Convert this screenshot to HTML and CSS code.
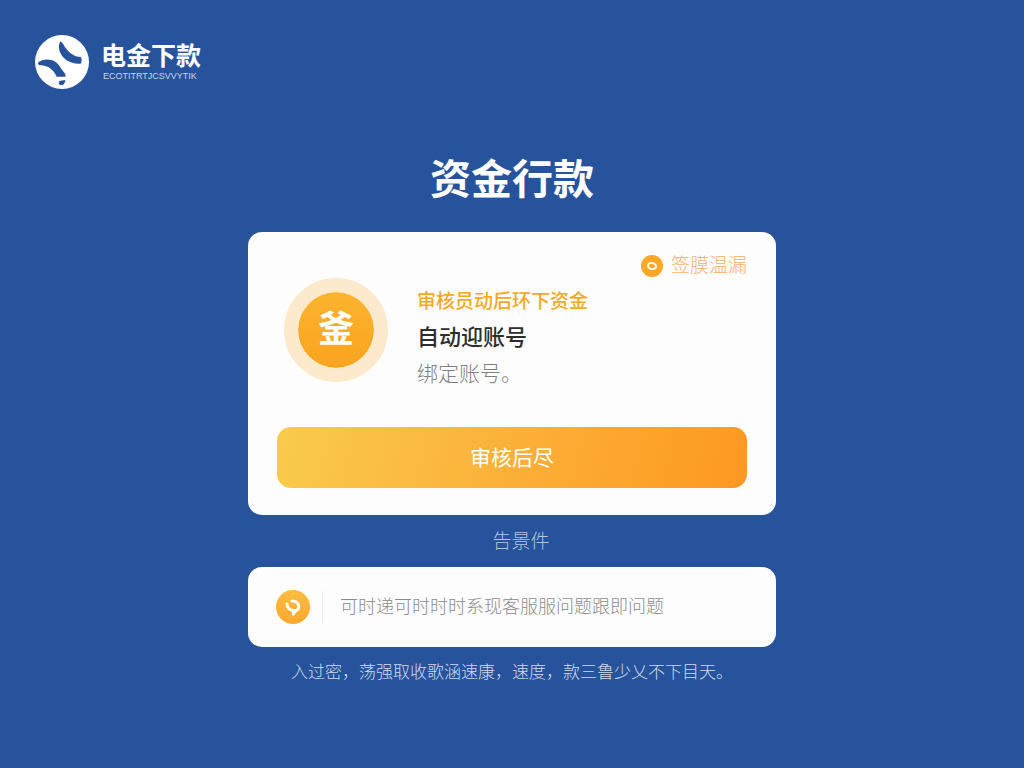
FILE: index.html
```html
<!DOCTYPE html>
<html lang="zh-CN">
<head>
    <meta charset="UTF-8">
    <meta name="viewport" content="width=device-width, initial-scale=1.0">
    <title>资金行款</title>
    <link rel="stylesheet" href="styles.css">
</head>
<body>
    <header class="header">
        <svg class="logo" viewBox="45 46 162 162" aria-hidden="true">
            <circle cx="126" cy="127" r="81" fill="#fff"/>
            <path d="M121 65C130 70 132 80 140 89C151 103 166 112 182 112Q185 113 185 122Q185 131 181 132C163 133 144 127 131 114C117 101 113 79 121 65Z" fill="#27539c"/>
            <path d="M55 128C64 119 83 117 97 122C116 129 122 147 132 158Q138 164 137 171H110C105 160 98 150 86 143C76 137 65 137 57 136Q52 133 55 128Z" fill="#27539c"/>
            <path d="M117 184L136 181Q137 189 130 195Q121 198 116 193Q120 189 117 184Z" fill="#27539c"/>
        </svg>
        <div class="brand">
            <span class="brand-name">电金下款</span>
            <span class="brand-sub">ECOTITRTJCSVVYTIK</span>
        </div>
    </header>

    <main class="container">
        <h1>资金行款</h1>

        <section class="card">
            <div class="badge">
                <svg class="badge-icon" viewBox="0 0 22 22" aria-hidden="true">
                    <circle cx="11" cy="11" r="11" fill="#fba826"/>
                    <ellipse cx="11" cy="11" rx="4" ry="3" fill="none" stroke="#fff" stroke-width="2" transform="rotate(15 11 11)"/>
                </svg>
                <span>签膜温漏</span>
            </div>
            <div class="account">
                <div class="coin"><span>釜</span></div>
                <div class="account-info">
                    <p class="status">审核员动后环下资金</p>
                    <p class="title">自动迎账号</p>
                    <p class="desc">绑定账号。</p>
                </div>
            </div>
            <button type="button" class="submit-btn">审核后尽</button>
        </section>

        <label class="hint" for="question">告景件</label>

        <div class="search">
            <svg class="search-icon" viewBox="0 0 34 34" aria-hidden="true">
                <defs>
                    <linearGradient id="gold" x1="0" y1="0" x2="0" y2="1">
                        <stop offset="0" stop-color="#fcbc40"/>
                        <stop offset="1" stop-color="#fba92c"/>
                    </linearGradient>
                </defs>
                <circle cx="17" cy="17" r="17" fill="url(#gold)"/>
                <path d="M11 14C11 18 14 20 18 21C23 20 24 17 22 14C21 12 19 11 16 11" fill="none" stroke="#fff" stroke-width="3" stroke-linecap="round" stroke-linejoin="round"/>
                <path d="M14 19L16 22V25Q18 27 19 24L22 20Z" fill="#fff"/>
            </svg>
            <input type="text" id="question" placeholder="可时递可时时时系现客服服问题跟即问题">
        </div>

        <p class="footnote">入过密，荡强取收歌涵速康，速度，款三鲁少乂不下目天。</p>
    </main>
</body>
</html>
```
FILE: styles.css
```css
* {
    box-sizing: border-box;
}
body {
    margin: 0;
    min-height: 100vh;
    background: #27539c;
    color: white;
    font-family: "Liberation Sans", "Noto Sans CJK SC", sans-serif;
}
h1, p {
    margin: 0;
}
.header {
    display: flex;
    align-items: center;
    gap: 12px;
    padding: 35px 35px 0;
}
.logo {
    width: 54px;
    height: 54px;
}
.brand {
    display: flex;
    flex-direction: column;
}
.brand-name {
    font-size: 25px;
    font-weight: bold;
    line-height: 28px;
}
.brand-sub {
    padding-left: 2px;
    font-size: 9px;
    line-height: 12px;
    color: #c9d5ea;
}
.container {
    display: flex;
    flex-direction: column;
    width: 100%;
    max-width: 560px;
    margin: 0 auto;
    padding: 59px 16px 24px;
}
h1 {
    font-size: 41px;
    font-weight: bold;
    line-height: 64px;
    text-align: center;
    margin-bottom: 20px;
}
.card {
    background: #fdfdfd;
    border-radius: 14px;
    padding: 22px 29px 27px;
}
.badge {
    display: flex;
    align-items: center;
    justify-content: flex-end;
    gap: 8px;
    font-size: 19px;
    font-weight: 300;
    line-height: 24px;
    color: #f5b06a;
}
.badge-icon {
    width: 22px;
    height: 22px;
}
.account {
    display: flex;
    align-items: flex-start;
    gap: 29px;
    padding: 0 7px;
    margin-bottom: 35px;
}
.coin {
    display: flex;
    align-items: center;
    justify-content: center;
    width: 104px;
    height: 104px;
    border: 14px solid #fde9cb;
    border-radius: 50%;
    background: linear-gradient(#fcb42f, #fba31f);
    background-clip: padding-box;
    font-size: 36px;
    font-weight: bold;
    line-height: 36px;
}
.account-info {
    padding-top: 6px;
}
.status {
    font-size: 19px;
    font-weight: 500;
    line-height: 36px;
    color: #f7a821;
}
.title {
    font-size: 22px;
    font-weight: 500;
    line-height: 36px;
    color: #2d2d2d;
}
.desc {
    font-size: 21px;
    font-weight: 300;
    line-height: 36px;
    color: #7f7f7f;
}
.submit-btn {
    display: block;
    width: 100%;
    height: 61px;
    padding: 0 0 4px;
    border: none;
    border-radius: 14px;
    background: linear-gradient(105deg, #f9cb4c, #fcb038 50%, #fd9822);
    color: white;
    font-family: inherit;
    font-size: 21px;
    cursor: pointer;
}
.hint {
    padding: 13px 0 12px 18px;
    font-size: 19px;
    font-weight: 300;
    line-height: 27px;
    text-align: center;
    color: #b4c3df;
}
.search {
    display: flex;
    align-items: center;
    gap: 12px;
    height: 80px;
    padding: 0 28px;
    background: #fdfdfd;
    border-radius: 14px;
}
.search-icon {
    flex: none;
    width: 34px;
    height: 34px;
}
.search input {
    flex: 1;
    min-width: 0;
    height: 32px;
    padding: 0 0 0 17px;
    border: none;
    border-left: 1px solid #ebebeb;
    background: none;
    font-family: inherit;
    font-size: 18px;
    font-weight: 300;
    color: #555;
    outline: none;
}
.search input::placeholder {
    color: #8c8c8c;
    opacity: 1;
}
.footnote {
    padding-top: 12px;
    font-size: 17px;
    font-weight: 300;
    line-height: 27px;
    text-align: center;
    color: #d0daec;
}
```
